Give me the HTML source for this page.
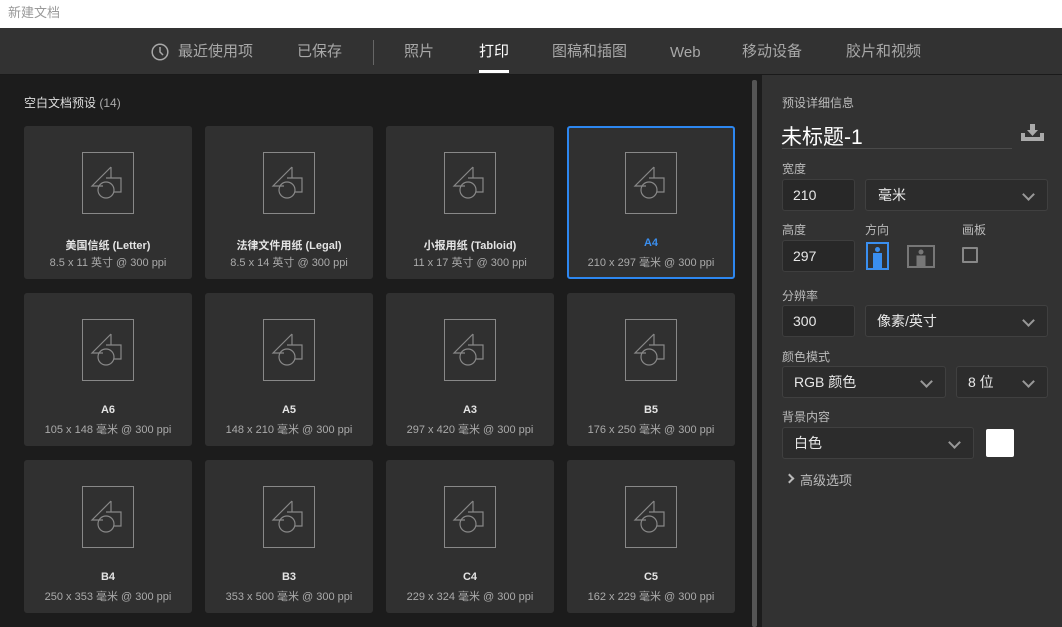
<!DOCTYPE html>
<html><head><meta charset="utf-8"><style>
*{box-sizing:border-box;margin:0;padding:0}
body{width:1062px;height:627px;overflow:hidden;background:#1c1c1c;font-family:"Liberation Sans","Noto Sans CJK SC",sans-serif;position:relative}
.title{position:absolute;left:0;top:0;width:1062px;height:28px;background:#fff;color:#999;font-size:13px;line-height:26px;padding-left:8px}
.tabs{position:absolute;left:0;top:28px;width:1062px;height:47px;background:#323232;border-bottom:1px solid #1a1a1a}
.tab{position:absolute;top:42px;height:20px;line-height:20px;font-size:15px;color:#a8a8a8;white-space:nowrap}
.tab.on{color:#fff}
.ul{position:absolute;left:479px;top:70px;width:30px;height:3px;background:#fff}
.sep{position:absolute;left:373px;top:40px;width:1px;height:25px;background:#666}
.hdr{position:absolute;left:24px;top:94px;font-size:12px;color:#ddd}
.card{position:absolute;width:168px;height:153px;background:#303030;border-radius:3px;text-align:center}
.card.sel{border:2px solid #2d87f0}
.card svg{position:absolute;left:58px;top:26px}
.card.sel svg{left:56px;top:24px}
.n{position:absolute;left:0;right:0;top:111px;font-size:11px;color:#e4e4e4;font-weight:bold}
.s{position:absolute;left:0;right:0;top:128px;font-size:11px;color:#aaa}
.card.sel .n{top:109px;color:#3a8ff0}.card.sel .s{top:126px}
.sb{position:absolute;left:752px;top:80px;width:5px;height:547px;background:#555;border-radius:2px}
.panel{position:absolute;left:762px;top:75px;width:300px;height:552px;background:#323232}
.l{position:absolute;font-size:12px;color:#bbb}
.box{position:absolute;background:#282828;border:1px solid #3e3e3e;border-radius:3px;color:#e8e8e8;font-size:14px;line-height:30px;padding-left:10px}
.dd{position:absolute;background:#2c2c2c;border:1px solid #404040;border-radius:3px;color:#e8e8e8;font-size:14px;line-height:30px;padding-left:11px}
.dd:after{content:"";position:absolute;right:14px;top:10px;width:7px;height:7px;border-right:2px solid #999;border-bottom:2px solid #999;transform:rotate(45deg)}
</style></head><body>
<div class="title">新建文档</div>
<div class="tabs"></div>
<svg style="position:absolute;left:151px;top:43px" width="18" height="18" viewBox="0 0 18 18"><circle cx="9" cy="9" r="7.8" fill="none" stroke="#a8a8a8" stroke-width="1.5"/><path d="M9 4v5l3 3" fill="none" stroke="#a8a8a8" stroke-width="1.5"/></svg>
<div class="tab" style="left:178px">最近使用项</div>
<div class="tab" style="left:297px">已保存</div>
<div class="sep"></div>
<div class="tab" style="left:404px">照片</div>
<div class="tab on" style="left:479px">打印</div>
<div class="ul"></div>
<div class="tab" style="left:552px">图稿和插图</div>
<div class="tab" style="left:670px;top:43px">Web</div>
<div class="tab" style="left:742px">移动设备</div>
<div class="tab" style="left:846px">胶片和视频</div>
<div class="hdr">空白文档预设 <span style="color:#aaa">(14)</span></div>

<div class="card" style="left:24px;top:126px"><svg width="52" height="62"><rect x="0.5" y="0.5" width="51" height="61" fill="none" stroke="#888"/><path d="M29 15L10 34H21M29 15V26M24 26H39V40H32" fill="none" stroke="#888" stroke-width="1.2"/><circle cx="24" cy="38" r="8" fill="none" stroke="#888" stroke-width="1.2"/></svg><div class="n">美国信纸 (Letter)</div><div class="s">8.5 x 11 英寸 @ 300 ppi</div></div>
<div class="card" style="left:205px;top:126px"><svg width="52" height="62"><rect x="0.5" y="0.5" width="51" height="61" fill="none" stroke="#888"/><path d="M29 15L10 34H21M29 15V26M24 26H39V40H32" fill="none" stroke="#888" stroke-width="1.2"/><circle cx="24" cy="38" r="8" fill="none" stroke="#888" stroke-width="1.2"/></svg><div class="n">法律文件用纸 (Legal)</div><div class="s">8.5 x 14 英寸 @ 300 ppi</div></div>
<div class="card" style="left:386px;top:126px"><svg width="52" height="62"><rect x="0.5" y="0.5" width="51" height="61" fill="none" stroke="#888"/><path d="M29 15L10 34H21M29 15V26M24 26H39V40H32" fill="none" stroke="#888" stroke-width="1.2"/><circle cx="24" cy="38" r="8" fill="none" stroke="#888" stroke-width="1.2"/></svg><div class="n">小报用纸 (Tabloid)</div><div class="s">11 x 17 英寸 @ 300 ppi</div></div>
<div class="card sel" style="left:567px;top:126px"><svg width="52" height="62"><rect x="0.5" y="0.5" width="51" height="61" fill="none" stroke="#888"/><path d="M29 15L10 34H21M29 15V26M24 26H39V40H32" fill="none" stroke="#888" stroke-width="1.2"/><circle cx="24" cy="38" r="8" fill="none" stroke="#888" stroke-width="1.2"/></svg><div class="n">A4</div><div class="s">210 x 297 毫米 @ 300 ppi</div></div>

<div class="card" style="left:24px;top:293px"><svg width="52" height="62"><rect x="0.5" y="0.5" width="51" height="61" fill="none" stroke="#888"/><path d="M29 15L10 34H21M29 15V26M24 26H39V40H32" fill="none" stroke="#888" stroke-width="1.2"/><circle cx="24" cy="38" r="8" fill="none" stroke="#888" stroke-width="1.2"/></svg><div class="n">A6</div><div class="s">105 x 148 毫米 @ 300 ppi</div></div>
<div class="card" style="left:205px;top:293px"><svg width="52" height="62"><rect x="0.5" y="0.5" width="51" height="61" fill="none" stroke="#888"/><path d="M29 15L10 34H21M29 15V26M24 26H39V40H32" fill="none" stroke="#888" stroke-width="1.2"/><circle cx="24" cy="38" r="8" fill="none" stroke="#888" stroke-width="1.2"/></svg><div class="n">A5</div><div class="s">148 x 210 毫米 @ 300 ppi</div></div>
<div class="card" style="left:386px;top:293px"><svg width="52" height="62"><rect x="0.5" y="0.5" width="51" height="61" fill="none" stroke="#888"/><path d="M29 15L10 34H21M29 15V26M24 26H39V40H32" fill="none" stroke="#888" stroke-width="1.2"/><circle cx="24" cy="38" r="8" fill="none" stroke="#888" stroke-width="1.2"/></svg><div class="n">A3</div><div class="s">297 x 420 毫米 @ 300 ppi</div></div>
<div class="card" style="left:567px;top:293px"><svg width="52" height="62"><rect x="0.5" y="0.5" width="51" height="61" fill="none" stroke="#888"/><path d="M29 15L10 34H21M29 15V26M24 26H39V40H32" fill="none" stroke="#888" stroke-width="1.2"/><circle cx="24" cy="38" r="8" fill="none" stroke="#888" stroke-width="1.2"/></svg><div class="n">B5</div><div class="s">176 x 250 毫米 @ 300 ppi</div></div>

<div class="card" style="left:24px;top:460px"><svg width="52" height="62"><rect x="0.5" y="0.5" width="51" height="61" fill="none" stroke="#888"/><path d="M29 15L10 34H21M29 15V26M24 26H39V40H32" fill="none" stroke="#888" stroke-width="1.2"/><circle cx="24" cy="38" r="8" fill="none" stroke="#888" stroke-width="1.2"/></svg><div class="n">B4</div><div class="s">250 x 353 毫米 @ 300 ppi</div></div>
<div class="card" style="left:205px;top:460px"><svg width="52" height="62"><rect x="0.5" y="0.5" width="51" height="61" fill="none" stroke="#888"/><path d="M29 15L10 34H21M29 15V26M24 26H39V40H32" fill="none" stroke="#888" stroke-width="1.2"/><circle cx="24" cy="38" r="8" fill="none" stroke="#888" stroke-width="1.2"/></svg><div class="n">B3</div><div class="s">353 x 500 毫米 @ 300 ppi</div></div>
<div class="card" style="left:386px;top:460px"><svg width="52" height="62"><rect x="0.5" y="0.5" width="51" height="61" fill="none" stroke="#888"/><path d="M29 15L10 34H21M29 15V26M24 26H39V40H32" fill="none" stroke="#888" stroke-width="1.2"/><circle cx="24" cy="38" r="8" fill="none" stroke="#888" stroke-width="1.2"/></svg><div class="n">C4</div><div class="s">229 x 324 毫米 @ 300 ppi</div></div>
<div class="card" style="left:567px;top:460px"><svg width="52" height="62"><rect x="0.5" y="0.5" width="51" height="61" fill="none" stroke="#888"/><path d="M29 15L10 34H21M29 15V26M24 26H39V40H32" fill="none" stroke="#888" stroke-width="1.2"/><circle cx="24" cy="38" r="8" fill="none" stroke="#888" stroke-width="1.2"/></svg><div class="n">C5</div><div class="s">162 x 229 毫米 @ 300 ppi</div></div>

<div class="sb"></div>
<div class="panel"></div>
<div class="l" style="left:782px;top:94px">预设详细信息</div>
<div style="position:absolute;left:781px;top:121px;font-size:21px;color:#fff">未标题-1</div>
<div style="position:absolute;left:782px;top:148px;width:230px;height:1px;background:#4a4a4a"></div>
<svg style="position:absolute;left:1021px;top:124px" width="23" height="17" viewBox="0 0 23 17"><path d="M0 9h4v4h15V9h4v8H0z" fill="#aaa"/><path d="M9 0h5v6h3l-5.5 6L6 6h3z" fill="#aaa"/></svg>
<div class="l" style="left:782px;top:160px">宽度</div>
<div class="box" style="left:782px;top:179px;width:73px;height:32px">210</div>
<div class="dd" style="left:865px;top:179px;width:183px;height:32px;padding-left:12px">毫米</div>
<div class="l" style="left:782px;top:221px">高度</div>
<div class="l" style="left:865px;top:221px">方向</div>
<div class="l" style="left:962px;top:221px">画板</div>
<div class="box" style="left:782px;top:240px;width:73px;height:32px">297</div>
<svg style="position:absolute;left:866px;top:242px" width="23" height="28"><rect x="1" y="1" width="21" height="26" fill="none" stroke="#3a8ff0" stroke-width="2"/><circle cx="11.5" cy="7.5" r="2.5" fill="#3a8ff0"/><rect x="7" y="11" width="9" height="16" fill="#3a8ff0"/></svg>
<svg style="position:absolute;left:907px;top:245px" width="28" height="23"><rect x="1" y="1" width="26" height="21" fill="none" stroke="#777" stroke-width="2"/><circle cx="14" cy="7" r="2.5" fill="#777"/><rect x="9.5" y="10.5" width="9" height="11" fill="#777"/></svg>
<div style="position:absolute;left:962px;top:247px;width:16px;height:16px;border:2px solid #888;border-radius:1px"></div>
<div class="l" style="left:782px;top:287px">分辨率</div>
<div class="box" style="left:782px;top:305px;width:73px;height:32px">300</div>
<div class="dd" style="left:865px;top:305px;width:183px;height:32px">像素/英寸</div>
<div class="l" style="left:782px;top:348px">颜色模式</div>
<div class="dd" style="left:782px;top:366px;width:164px;height:32px">RGB 颜色</div>
<div class="dd" style="left:956px;top:366px;width:92px;height:32px">8 位</div>
<div class="l" style="left:782px;top:408px">背景内容</div>
<div class="dd" style="left:782px;top:427px;width:192px;height:32px">白色</div>
<div style="position:absolute;left:986px;top:429px;width:28px;height:28px;background:#fff;border-radius:2px"></div>
<div style="position:absolute;left:786px;top:475px;width:7px;height:7px;border-right:2px solid #bbb;border-top:2px solid #bbb;transform:rotate(45deg)"></div>
<div class="l" style="left:800px;top:470px;font-size:13px">高级选项</div>
</body></html>
